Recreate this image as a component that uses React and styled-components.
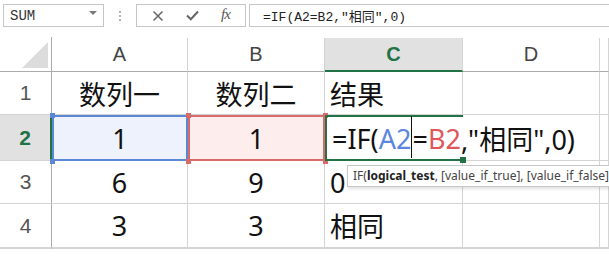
import React from "react";
import styled, { createGlobalStyle } from "styled-components";

const GlobalStyle = createGlobalStyle`
  html, body {
    margin: 0;
    padding: 0;
    background: #ffffff;
    overflow: hidden;
  }
`;

const Page = styled.div`
  width: 609px;
  height: 256px;
  overflow: hidden;
  font-family: "Noto Sans", "Noto Sans CJK SC", sans-serif;
`;

/* ---------- formula bar ---------- */
const Toolbar = styled.div`
  display: flex;
  align-items: center;
  height: 37px;
  padding: 0 0 0 3px;
  box-sizing: border-box;
`;

const NameBox = styled.div`
  width: 101px;
  height: 23px;
  box-sizing: border-box;
  border: 1px solid #c6c6c6;
  display: flex;
  align-items: center;
  justify-content: space-between;
  padding: 0 6px 0 6px;
  font-family: "Liberation Mono", "Noto Sans CJK SC", monospace;
  font-size: 14px;
  color: #333;
  margin-bottom: 6px;
`;

const Caret = styled.span`
  width: 0;
  height: 0;
  border-left: 4px solid transparent;
  border-right: 4px solid transparent;
  border-top: 4px solid #7a7a7a;
  margin-top: -5px;
`;

const Grip = styled.div`
  width: 32px;
  display: flex;
  flex-direction: column;
  align-items: center;
  gap: 2px;
  margin-bottom: 6px;
  span {
    width: 2px;
    height: 2px;
    background: #b5b5b5;
  }
`;

const ButtonGroup = styled.div`
  width: 110px;
  height: 23px;
  box-sizing: border-box;
  border: 1px solid #c6c6c6;
  display: flex;
  align-items: center;
  justify-content: space-around;
  padding: 0 4px;
  margin-bottom: 6px;
  margin-right: 3px;
`;

const FxText = styled.span`
  font-family: "Liberation Serif", serif;
  font-style: italic;
  font-size: 15px;
  color: #555;
  letter-spacing: -1px;
  margin-top: -2px;
`;

const FormulaBox = styled.div`
  flex: 1;
  height: 23px;
  box-sizing: border-box;
  border: 1px solid #c6c6c6;
  border-right: none;
  display: flex;
  align-items: center;
  padding-left: 13px;
  font-family: "Liberation Mono", "Noto Sans CJK SC", monospace;
  font-size: 13px;
  color: #222;
  margin-bottom: 6px;
  white-space: nowrap;
`;

/* ---------- sheet ---------- */
const Sheet = styled.div`
  display: grid;
  grid-template-columns: 52px 136px 137px 138px 137px 1fr;
  grid-template-rows: 35px 43px 46px 43px 44px 1fr;
`;

const Corner = styled.div`
  position: relative;
  border-right: 1px solid #ababab;
  border-bottom: 1px solid #ababab;
  box-sizing: border-box;
  svg {
    position: absolute;
    left: 22px;
    top: 5px;
  }
`;

const ColHead = styled.div`
  box-sizing: border-box;
  display: flex;
  align-items: center;
  justify-content: center;
  font-size: 20px;
  font-family: "Liberation Sans", sans-serif;
  color: ${(p) => (p.$active ? "#217346" : "#444")};
  font-weight: ${(p) => (p.$active ? 700 : 400)};
  background: ${(p) => (p.$active ? "#e1e1e1" : "#fff")};
  border-right: 1px solid #d4d4d4;
  border-bottom: ${(p) => (p.$active ? "2px solid #217346" : "1px solid #ababab")};
  margin-top: 1px;
`;

const RowHead = styled.div`
  box-sizing: border-box;
  display: flex;
  align-items: center;
  justify-content: center;
  font-size: 21px;
  font-family: "Liberation Sans", sans-serif;
  color: ${(p) => (p.$active ? "#217346" : "#555")};
  font-weight: ${(p) => (p.$active ? 700 : 400)};
  background: ${(p) => (p.$active ? "#e1e1e1" : "#fff")};
  border-right: ${(p) => (p.$active ? "2px solid #217346" : "1px solid #ababab")};
  border-bottom: 1px solid #d4d4d4;
`;

const Cell = styled.div`
  position: relative;
  box-sizing: border-box;
  display: flex;
  align-items: center;
  justify-content: ${(p) => (p.$left ? "flex-start" : "center")};
  padding-left: ${(p) => (p.$left ? "5px" : "0")};
  font-size: 27px;
  font-family: "Noto Sans", "Noto Sans CJK SC", sans-serif;
  color: #111;
  white-space: nowrap;
  border-right: 1px solid #d4d4d4;
  border-bottom: 1px solid #d4d4d4;
`;

const RefCell = styled(Cell)`
  background: ${(p) => p.$bg};
  box-shadow: inset 0 0 0 2px ${(p) => p.$line};
  border: none;
  z-index: 2;
  overflow: visible;
`;

const Handle = styled.span`
  position: absolute;
  width: 5px;
  height: 5px;
  background: ${(p) => p.$color};
  left: ${(p) => (p.$x ? "auto" : "-2px")};
  right: ${(p) => (p.$x ? "-3px" : "auto")};
  top: ${(p) => (p.$y ? "auto" : "-2px")};
  bottom: ${(p) => (p.$y ? "-3px" : "auto")};
`;

const EditCell = styled.div`
  position: relative;
  z-index: 3;
  box-sizing: border-box;
  display: flex;
  align-items: center;
  padding-left: 5px;
  font-size: 27px;
  font-family: "Noto Sans", "Noto Sans CJK SC", sans-serif;
  color: #111;
  white-space: nowrap;
  overflow: visible;
  border-left: 2px solid #217346;
  border-top: 2px solid #217346;
  border-bottom: 2px solid #217346;
`;

const EditText = styled.span`
  display: inline-flex;
  align-items: center;
`;

const Ref = styled.span`
  color: ${(p) => p.$color};
`;

const Cursor = styled.span`
  display: inline-block;
  width: 1px;
  height: 42px;
  background: #111;
  margin-top: -2px;
`;

const FillHandle = styled.span`
  position: absolute;
  right: -3px;
  bottom: -4px;
  width: 6px;
  height: 6px;
  background: #217346;
`;

const Tip = styled.div`
  position: absolute;
  left: 20px;
  top: 48px;
  padding: 1px 6px 2px 5px;
  background: #fff;
  border: 1px solid #c8c8c8;
  box-shadow: 1px 2px 3px rgba(0, 0, 0, 0.12);
  font-family: "Noto Sans", sans-serif;
  font-size: 12px;
  color: #444;
  white-space: nowrap;
  b {
    color: #222;
  }
`;

const XIcon = () => (
  <svg width="12" height="12" viewBox="0 0 12 12">
    <path d="M1.5 1.5 L10.5 10.5 M10.5 1.5 L1.5 10.5" stroke="#666" strokeWidth="1.5" />
  </svg>
);

const CheckIcon = () => (
  <svg width="13" height="11" viewBox="0 0 13 11">
    <path d="M1 5.5 L4.8 9.3 L12 1.5" stroke="#666" strokeWidth="2" fill="none" />
  </svg>
);

export default function App() {
  return (
    <Page>
      <GlobalStyle />
      <Toolbar>
        <NameBox>
          SUM
          <Caret />
        </NameBox>
        <Grip>
          <span />
          <span />
          <span />
        </Grip>
        <ButtonGroup>
          <XIcon />
          <CheckIcon />
          <FxText>fx</FxText>
        </ButtonGroup>
        <FormulaBox>=IF(A2=B2,"相同",0)</FormulaBox>
      </Toolbar>
      <Sheet>
        <Corner>
          <svg width="26" height="26" viewBox="0 0 26 26">
            <polygon points="0,26 26,0 26,26" fill="#dcdcdc" />
          </svg>
        </Corner>
        <ColHead>A</ColHead>
        <ColHead>B</ColHead>
        <ColHead $active>C</ColHead>
        <ColHead>D</ColHead>
        <ColHead />

        <RowHead>1</RowHead>
        <Cell>数列一</Cell>
        <Cell>数列二</Cell>
        <Cell $left>结果</Cell>
        <Cell />
        <Cell />

        <RowHead $active>2</RowHead>
        <RefCell $bg="#edf2fc" $line="#5b87d4">
          1
          <Handle $color="#5b87d4" />
          <Handle $color="#5b87d4" $x />
          <Handle $color="#5b87d4" $y />
          <Handle $color="#5b87d4" $x $y />
        </RefCell>
        <RefCell $bg="#fdeded" $line="#d86a6a">
          1
          <Handle $color="#d86a6a" />
          <Handle $color="#d86a6a" $x />
          <Handle $color="#d86a6a" $y />
          <Handle $color="#d86a6a" $x $y />
        </RefCell>
        <EditCell>
          <EditText>
            <span>=IF(</span>
            <Ref $color="#5b87e0">A2</Ref>
            <Cursor />
            <span>=</span>
            <Ref $color="#e0575a">B2</Ref>
            <span>,"相同",0)</span>
          </EditText>
          <FillHandle />
          <Tip>
            IF(<b>logical_test</b>, [value_if_true], [value_if_false]
          </Tip>
        </EditCell>
        <Cell />
        <Cell />

        <RowHead>3</RowHead>
        <Cell>6</Cell>
        <Cell>9</Cell>
        <Cell $left>0</Cell>
        <Cell />
        <Cell />

        <RowHead>4</RowHead>
        <Cell>3</Cell>
        <Cell>3</Cell>
        <Cell $left>相同</Cell>
        <Cell />
        <Cell />

        <RowHead />
        <Cell />
        <Cell />
        <Cell />
        <Cell />
        <Cell />
      </Sheet>
    </Page>
  );
}
